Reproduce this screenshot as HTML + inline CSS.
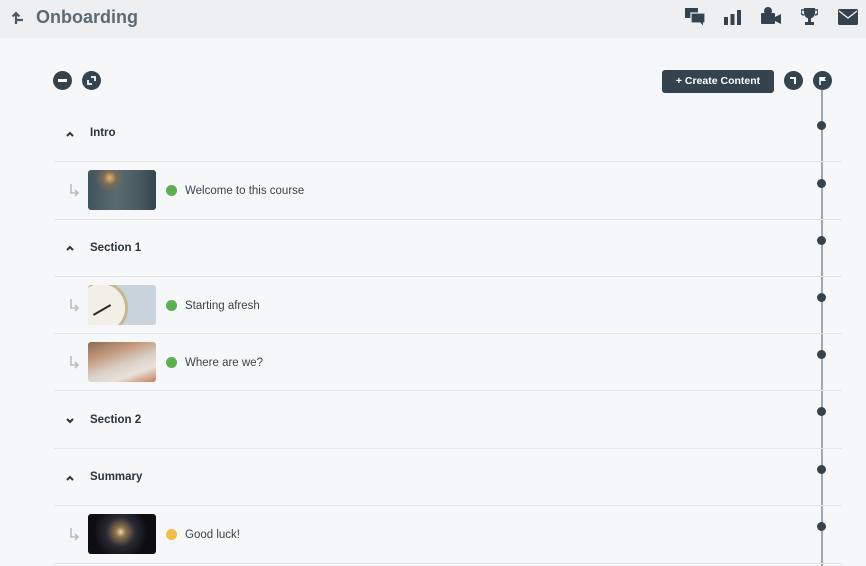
<!DOCTYPE html>
<html><head><meta charset="utf-8"><style>
*{margin:0;padding:0;box-sizing:border-box}
body{width:866px;height:566px;overflow:hidden;background:#f6f7f9;font-family:"Liberation Sans",sans-serif;position:relative;color:#2f3a42}
.hdr{position:absolute;left:0;top:0;width:866px;height:38px;background:#eeeff1}
.title{position:absolute;left:36px;top:7px;font-size:18px;font-weight:bold;color:#5a6b77}
.abs{position:absolute}
.circ{position:absolute;width:19px;height:19px;border-radius:50%;background:#34434d}
.div{position:absolute;left:54px;width:788px;height:1px;background:#e3e6e9}
.sec{position:absolute;left:90px;font-size:11.5px;font-weight:bold;color:#2b353c}
.chev{position:absolute;left:66px;width:8px;height:8px}
.item{position:absolute;left:185px;font-size:11.5px;color:#3a444b}
.thumb{position:absolute;left:88px;width:68px;height:40px;border-radius:3px}
.dot{position:absolute;left:166px;width:11px;height:11px;border-radius:50%;background:#5cb04d}
.tdot{position:absolute;left:817px;width:9px;height:9px;border-radius:50%;background:#34434d}
.arr{position:absolute;left:68px;width:12px;height:14px}
</style></head><body>
<div class="hdr"></div>
<svg class="abs" style="left:11px;top:10px" width="14" height="16" viewBox="0 0 14 16"><path d="M5 14V3M1.5 6.5L5 3l3.5 3.5M5 10h7" stroke="#4a5a66" stroke-width="2.2" fill="none"/></svg>
<div class="title">Onboarding</div>
<svg class="abs" style="left:685px;top:8px" width="21" height="18" viewBox="0 0 21 18"><rect x="0" y="0" width="13" height="10" fill="#34434d"/><rect x="6" y="5" width="14" height="10" fill="#34434d" stroke="#eeeff1" stroke-width="1.2"/><path d="M15 14l3 3.5v-3.5z" fill="#34434d"/></svg>
<svg class="abs" style="left:724px;top:10px" width="18" height="15" viewBox="0 0 18 15"><rect x="0" y="7" width="4" height="8" fill="#34434d"/><rect x="6.5" y="4" width="4" height="11" fill="#34434d"/><rect x="13" y="0" width="4" height="15" fill="#34434d"/></svg>
<svg class="abs" style="left:761px;top:7px" width="21" height="18" viewBox="0 0 21 18"><circle cx="7" cy="4" r="4" fill="#34434d"/><rect x="0" y="6" width="14" height="11" rx="1" fill="#34434d"/><path d="M14 10l6-3v10l-6-3z" fill="#34434d"/></svg>
<svg class="abs" style="left:801px;top:8px" width="17" height="18" viewBox="0 0 17 18"><path d="M3 0h11v5a5.5 5.5 0 0 1-11 0z" fill="#34434d"/><path d="M3 2H0v2a3 3 0 0 0 3 3M14 2h3v2a3 3 0 0 1-3 3" stroke="#34434d" stroke-width="1.5" fill="none"/><rect x="7" y="9" width="3" height="5" fill="#34434d"/><rect x="4" y="14" width="9" height="3" fill="#34434d"/></svg>
<svg class="abs" style="left:838px;top:9px" width="20" height="16" viewBox="0 0 20 16"><rect width="20" height="16" rx="1.5" fill="#34434d"/><path d="M1 2l9 7 9-7" stroke="#eeeff1" stroke-width="1.3" fill="none"/></svg>
<div class="circ" style="left:53px;top:71px"></div><div class="abs" style="left:58px;top:79px;width:9px;height:3px;background:#fff"></div>
<div class="circ" style="left:82px;top:71px"></div>
<svg class="abs" style="left:82px;top:71px" width="19" height="19" viewBox="0 0 19 19"><path d="M9 6h4v4M10 13H6V9" stroke="#fff" stroke-width="1.8" fill="none"/></svg>
<div class="abs" style="left:662px;top:70px;width:112px;height:23px;background:#34434d;border-radius:3px;color:#fff;font-size:10.5px;font-weight:bold;text-align:center;line-height:23px">+ Create Content</div>
<div class="circ" style="left:784px;top:71px"></div>
<svg class="abs" style="left:784px;top:71px" width="19" height="19" viewBox="0 0 19 19"><path d="M6 7h5v6" stroke="#fff" stroke-width="2" fill="none"/></svg>
<div class="circ" style="left:813px;top:71px"></div>
<svg class="abs" style="left:813px;top:71px" width="19" height="19" viewBox="0 0 19 19"><path d="M7 6v8" stroke="#fff" stroke-width="1.5"/><path d="M7 6h6l-1.5 2 1.5 2H7z" fill="#fff"/></svg>
<div class="abs" style="left:821px;top:90px;width:2px;height:476px;background:#a0a6ad"></div>
<div class="tdot" style="top:121px"></div><div class="tdot" style="top:179px"></div><div class="tdot" style="top:236px"></div><div class="tdot" style="top:293px"></div><div class="tdot" style="top:350px"></div><div class="tdot" style="top:407px"></div><div class="tdot" style="top:465px"></div><div class="tdot" style="top:522px"></div>
<div class="div" style="top:161px"></div><div class="div" style="top:219px"></div><div class="div" style="top:276px"></div><div class="div" style="top:333px"></div><div class="div" style="top:390px"></div><div class="div" style="top:448px"></div><div class="div" style="top:505px"></div><div class="div" style="top:563px"></div>
<svg class="chev" style="top:130px" viewBox="0 0 8 8"><path d="M1 6l3-3 3 3" stroke="#2b353c" stroke-width="2" fill="none"/></svg><div class="sec" style="top:127px">Intro</div>
<svg class="chev" style="top:244px" viewBox="0 0 8 8"><path d="M1 6l3-3 3 3" stroke="#2b353c" stroke-width="2" fill="none"/></svg><div class="sec" style="top:242px">Section 1</div>
<svg class="chev" style="top:416px" viewBox="0 0 8 8"><path d="M1 3l3 3 3-3" stroke="#2b353c" stroke-width="2" fill="none"/></svg><div class="sec" style="top:414px">Section 2</div>
<svg class="chev" style="top:474px" viewBox="0 0 8 8"><path d="M1 6l3-3 3 3" stroke="#2b353c" stroke-width="2" fill="none"/></svg><div class="sec" style="top:471px">Summary</div>
<svg class="arr" style="top:184px" viewBox="0 0 12 14"><path d="M3 0v9h7M7 6l3 3-3 3" stroke="#b8bec4" stroke-width="1.6" fill="none"/></svg>
<div class="thumb" style="top:170px;background:radial-gradient(circle at 32% 20%,#e7b56a 0,#7a6a55 12%,transparent 25%),linear-gradient(90deg,#3f545e,#5b6a70 40%,#4d5d64 70%,#324650)"></div>
<div class="dot" style="top:185px"></div><div class="item" style="top:185px">Welcome to this course</div>
<svg class="arr" style="top:299px" viewBox="0 0 12 14"><path d="M3 0v9h7M7 6l3 3-3 3" stroke="#b8bec4" stroke-width="1.6" fill="none"/></svg>
<div class="thumb" style="top:285px;overflow:hidden;background:#c9d3dc"><div class="abs" style="left:-14px;top:-4px;width:54px;height:54px;border-radius:50%;background:#f2efe8;border:3px solid #c8b68f"></div><div class="abs" style="left:4px;top:24px;width:20px;height:2px;background:#2a2a2a;transform:rotate(-30deg)"></div></div>
<div class="dot" style="top:300px"></div><div class="item" style="top:300px">Starting afresh</div>
<svg class="arr" style="top:356px" viewBox="0 0 12 14"><path d="M3 0v9h7M7 6l3 3-3 3" stroke="#b8bec4" stroke-width="1.6" fill="none"/></svg>
<div class="thumb" style="top:342px;background:linear-gradient(160deg,#8d6a55,#c49a7e 30%,#d9cfc6 55%,#e9e2da 75%,#c07e56)"></div>
<div class="dot" style="top:357px"></div><div class="item" style="top:357px">Where are we?</div>
<svg class="arr" style="top:528px" viewBox="0 0 12 14"><path d="M3 0v9h7M7 6l3 3-3 3" stroke="#b8bec4" stroke-width="1.6" fill="none"/></svg>
<div class="thumb" style="top:514px;background:radial-gradient(circle at 48% 45%,#f2d9a0 0,#8c7450 12%,#2b2a35 35%,#0d0d12 65%)"></div>
<div class="dot" style="top:529px;background:#f2bd42"></div><div class="item" style="top:529px">Good luck!</div>
</body></html>
